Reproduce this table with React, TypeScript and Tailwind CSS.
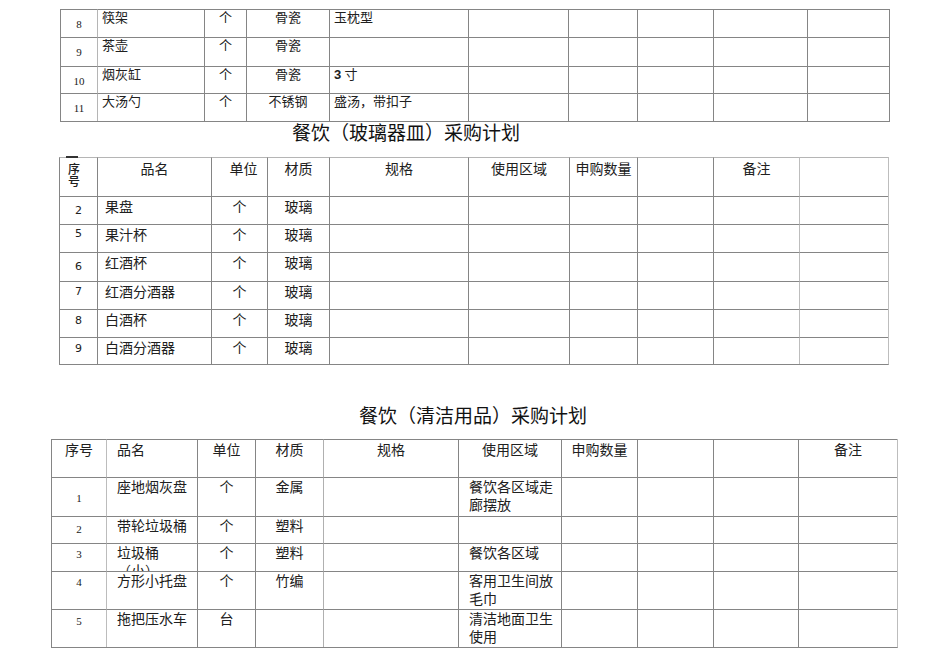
import type { ReactNode } from 'react';

type Cell = { c?: ReactNode; cls?: string };
type Row = { h: string; cells: Cell[] };

const font = "font-['Liberation_Serif','Noto_Sans_CJK_SC',serif]";

function Table({ cols, rows, className }: { cols: string[]; rows: Row[]; className: string }) {
  return (
    <div className={`flex flex-col w-fit border-r border-b border-[#858585] ${className}`}>
      {rows.map((row, r) => (
        <div key={r} className={`flex ${row.h}`}>
          {cols.map((col, i) => (
            <div
              key={i}
              className={`relative shrink-0 h-full border-l border-t border-[#858585] overflow-hidden ${col} ${row.cells[i]?.cls ?? ''}`}
            >
              {row.cells[i]?.c}
            </div>
          ))}
        </div>
      ))}
    </div>
  );
}

// ---- table 1 : tail of 骨瓷 list
const t1Cols = [
  'w-[37px]',
  'w-[107px] border-l-[#b5b5b5]',
  'w-[42px]',
  'w-[83px]',
  'w-[139px]',
  'w-[100px]',
  'w-[69px]',
  'w-[76px]',
  'w-[94px]',
  'w-[82px]',
];

const t1Num = "text-center pt-[6px] text-[11px] leading-[16px] font-['Liberation_Serif',serif]";
const t1Name = 'pl-[4px] text-[13px] leading-[16px]';
const t1Mid = 'text-center text-[13px] leading-[16px]';

function t1Row(h: string, n: string, name: string, mat: string, spec: ReactNode): Row {
  return {
    h,
    cells: [
      { c: n, cls: t1Num },
      { c: name, cls: t1Name },
      { c: '个', cls: t1Mid },
      { c: mat, cls: t1Mid },
      { c: spec, cls: t1Name },
    ],
  };
}

const t1Rows: Row[] = [
  t1Row('h-[28px]', '8', '筷架', '骨瓷', '玉枕型'),
  t1Row('h-[29px]', '9', '茶壶', '骨瓷', ''),
  t1Row(
    'h-[27px]',
    '10',
    '烟灰缸',
    '骨瓷',
    <>
      <span className="font-['Liberation_Sans',sans-serif] font-bold">3</span> 寸
    </>,
  ),
  t1Row('h-[28px]', '11', '大汤勺', '不锈钢', '盛汤，带扣子'),
];

// ---- table 2 : 玻璃器皿
const t2Cols = [
  'w-[38px]',
  'w-[114px]',
  'w-[56px]',
  'w-[62px]',
  'w-[139px]',
  'w-[101px]',
  'w-[68px]',
  'w-[76px]',
  'w-[86px]',
  'w-[89px] border-l-[#bdbdbd]',
];

const t2Head = 'text-center pt-[3px] text-[14px] leading-[18px] border-t-[#b5b5b5]';
const t2NumBase = "text-center text-[11px] leading-[18px] font-['DejaVu_Sans',sans-serif]";
const t2Name = 'pl-[7px] pt-[2px] text-[14px] leading-[18px]';
const t2Mid = 'text-center pt-[2px] text-[14px] leading-[18px]';

const t2Header: Row = {
  h: 'h-[39px]',
  cells: [
    {
      c: (
        <>
          <div className="absolute left-[6px] top-[-2px] w-[12px] h-[2px] bg-[#333]" />
          <div className="pl-[8px] pt-[6px] text-[12px] leading-[12px] font-medium">
            序<br />号
          </div>
        </>
      ),
      cls: 'overflow-visible border-t-[#b5b5b5]',
    },
    { c: '品名', cls: t2Head },
    { c: '单位', cls: `${t2Head} pl-[8px]` },
    { c: '材质', cls: t2Head },
    { c: '规格', cls: t2Head },
    { c: '使用区域', cls: t2Head },
    { c: '申购数量', cls: t2Head },
    { cls: t2Head },
    { c: '备注', cls: t2Head },
    { cls: t2Head },
  ],
};

function t2Row(h: string, n: string, pt: string, name: string): Row {
  return {
    h,
    cells: [
      { c: n, cls: `${t2NumBase} ${pt}` },
      { c: name, cls: t2Name },
      { c: '个', cls: t2Mid },
      { c: '玻璃', cls: t2Mid },
    ],
  };
}

const t2Rows: Row[] = [
  t2Header,
  t2Row('h-[28px]', '2', 'pt-[5px]', '果盘'),
  t2Row('h-[28px]', '5', 'pt-[0px]', '果汁杯'),
  t2Row('h-[29px]', '6', 'pt-[5px]', '红酒杯'),
  t2Row('h-[28px]', '7', 'pt-[1px]', '红酒分酒器'),
  t2Row('h-[28px]', '8', 'pt-[2px]', '白酒杯'),
  t2Row('h-[27px]', '9', 'pt-[2px]', '白酒分酒器'),
];

// ---- table 3 : 清洁用品
const t3Cols = [
  'w-[55px]',
  'w-[91px] border-l-[#bcbcbc]',
  'w-[58px]',
  'w-[68px]',
  'w-[135px] border-l-[#b0b0b0]',
  'w-[103px]',
  'w-[76px]',
  'w-[76px]',
  'w-[85px]',
  'w-[99px]',
];

const t3Head = 'text-center pt-[2px] text-[14px] leading-[18px]';
const t3NumBase = "text-center text-[11px] leading-[18px] font-['Liberation_Serif',serif]";
const t3Left = 'pl-[10px] pt-[1px] text-[14px] leading-[18px]';
const t3Mid = 'text-center pt-[1px] text-[14px] leading-[18px]';

const t3Header: Row = {
  h: 'h-[38px]',
  cells: [
    { c: '序号', cls: t3Head },
    { c: '品名', cls: 'pl-[10px] pt-[2px] text-[14px] leading-[18px]' },
    { c: '单位', cls: t3Head },
    { c: '材质', cls: t3Head },
    { c: '规格', cls: t3Head },
    { c: '使用区域', cls: t3Head },
    { c: '申购数量', cls: t3Head },
    { cls: t3Head },
    { cls: t3Head },
    { c: '备注', cls: t3Head },
  ],
};

function t3Row(h: string, n: string, pt: string, name: string, unit: string, mat: string, area: string): Row {
  return {
    h,
    cells: [
      { c: n, cls: `${t3NumBase} ${pt}` },
      { c: name, cls: `${t3Left} pr-[8px]` },
      { c: unit, cls: t3Mid },
      { c: mat, cls: t3Mid },
      { cls: t3Mid },
      { c: area, cls: `${t3Left} pr-[2px]` },
    ],
  };
}

const t3Rows: Row[] = [
  t3Header,
  t3Row('h-[39px]', '1', 'pt-[11px]', '座地烟灰盘', '个', '金属', '餐饮各区域走廊摆放'),
  t3Row('h-[27px]', '2', 'pt-[3px]', '带轮垃圾桶', '个', '塑料', ''),
  t3Row('h-[28px]', '3', 'pt-[1px]', '垃圾桶（小）', '个', '塑料', '餐饮各区域'),
  t3Row('h-[38px]', '4', 'pt-[1px]', '方形小托盘', '个', '竹编', '客用卫生间放毛巾'),
  t3Row('h-[38px]', '5', 'pt-[2px]', '拖把压水车', '台', '', '清洁地面卫生使用'),
];

export default function App() {
  return (
    <div className={`w-[950px] h-[672px] overflow-hidden bg-white pt-[9px] text-[#202020] ${font}`}>
      <Table cols={t1Cols} rows={t1Rows} className="ml-[60px]" />

      <h2 className="ml-[292px] text-[19px] leading-[24px] font-normal text-[#111]">
        餐饮（玻璃器皿）采购计划
      </h2>

      <Table cols={t2Cols} rows={t2Rows} className="ml-[59px] mt-[11px] border-r-[#bdbdbd]" />

      <h2 className="ml-[359px] mt-[40px] text-[19px] leading-[24px] font-normal text-[#111]">
        餐饮（清洁用品）采购计划
      </h2>

      <Table cols={t3Cols} rows={t3Rows} className="ml-[51px] mt-[10px] border-r-[#bdbdbd]" />
    </div>
  );
}
